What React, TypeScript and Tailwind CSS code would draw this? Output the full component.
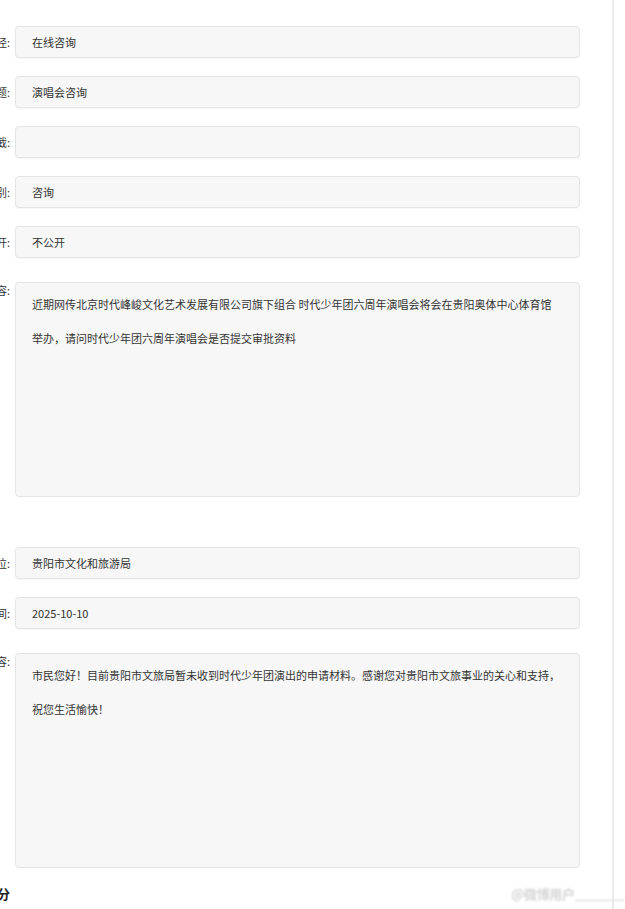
const CJK = '[font-family:"Noto_Sans_CJK_SC","Noto_Sans",sans-serif]';

function Label({ text, top }: { text: string; top?: boolean }) {
  return (
    <div
      className={`flex w-[10px] shrink-0 justify-end overflow-hidden whitespace-nowrap text-[11px] text-[#333] ${
        top ? 'h-4 leading-4' : 'h-8 leading-8'
      }`}
    >
      <span>{text}</span>
    </div>
  );
}

function Field({ label, value }: { label: string; value: string }) {
  return (
    <div className="flex items-start gap-[5px]">
      <Label text={label} />
      <div className="h-8 flex-1 rounded-[4px] border border-[#e4e4e4] bg-[#f7f7f7] px-4 text-[11px] leading-[30px] text-[#333] shadow-[0_1px_1px_rgba(0,0,0,0.03)]">
        {value}
      </div>
    </div>
  );
}

function Area({ label, lines }: { label: string; lines: string[] }) {
  return (
    <div className="flex items-start gap-[5px]">
      <Label text={label} top />
      <div className="h-[215px] flex-1 overflow-hidden rounded-[4px] border border-[#e4e4e4] bg-[#f7f7f7] px-4 pt-1 text-[11px] leading-[34px] text-[#333]">
        {lines.map((line) => (
          <div key={line} className="whitespace-nowrap">
            {line}
          </div>
        ))}
      </div>
    </div>
  );
}

export default function App() {
  return (
    <div className={`min-h-[909px] bg-white ${CJK}`}>
      <div className="relative h-[909px] w-[614px] border-r-2 border-[#ececec] pt-[26px] pr-[32px]">
        <div className="flex flex-col gap-[18px]">
          <Field label="咨询途径:" value="在线咨询" />
          <Field label="咨询标题:" value="演唱会咨询" />
          <Field label="关键截:" value="" />
          <Field label="咨询类别:" value="咨询" />
          <Field label="是否公开:" value="不公开" />
        </div>
        <div className="mt-6">
          <Area
            label="咨询内容:"
            lines={[
              '近期网传北京时代峰峻文化艺术发展有限公司旗下组合 时代少年团六周年演唱会将会在贵阳奥体中心体育馆',
              '举办，请问时代少年团六周年演唱会是否提交审批资料',
            ]}
          />
        </div>
        <div className="mt-[50px] flex flex-col gap-[18px]">
          <Field label="答复单位:" value="贵阳市文化和旅游局" />
          <Field label="答复时间:" value="2025-10-10" />
        </div>
        <div className="mt-6">
          <Area
            label="答复内容:"
            lines={[
              '市民您好！目前贵阳市文旅局暂未收到时代少年团演出的申请材料。感谢您对贵阳市文旅事业的关心和支持，',
              '祝您生活愉快！',
            ]}
          />
        </div>
        <div className="mt-4 flex">
          <div className="flex w-[10px] justify-end overflow-hidden whitespace-nowrap text-[13px] font-bold leading-5 text-[#222]">
            <span>评分</span>
          </div>
        </div>
        <div className="absolute bottom-[6px] right-[-12px] text-[13px] font-bold tracking-tight text-[#d4d4d4] blur-[1px]">
          @微博用户_______
        </div>
      </div>
    </div>
  );
}
